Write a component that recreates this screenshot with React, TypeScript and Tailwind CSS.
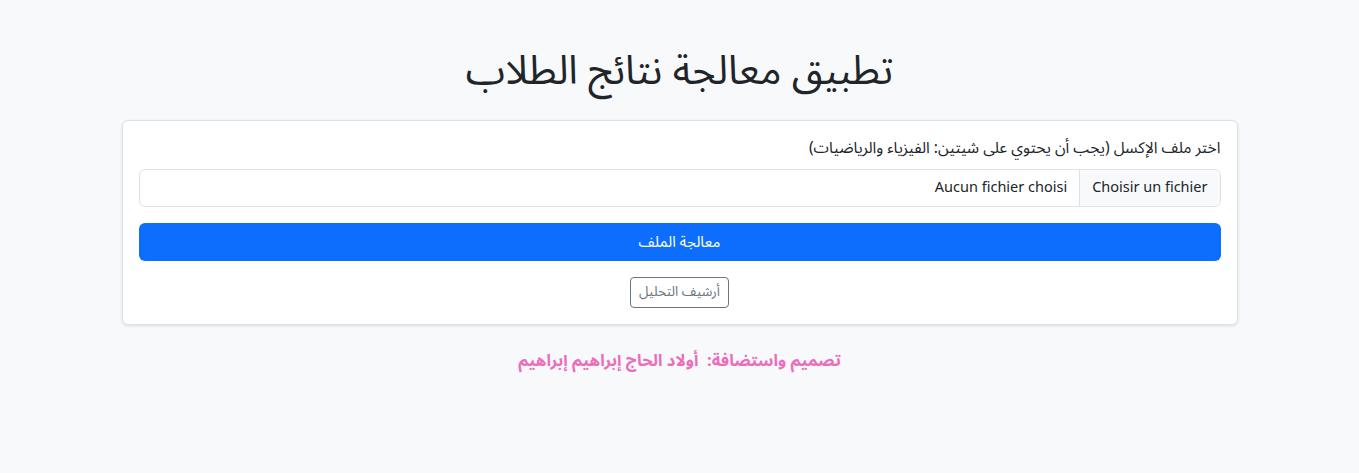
export default function App() {
  const font = { fontFamily: '"Noto Sans Arabic", "DejaVu Sans", "Noto Sans", sans-serif' };
  return (
    <div dir="rtl" className="min-h-[473px] bg-[#f8f9fa] text-[#212529]" style={font}>
      <div className="mx-auto w-[1140px] px-3 pt-12">
        <h1 className="mb-6 text-center text-[40px] leading-[48px] font-normal">تطبيق معالجة نتائج الطلاب</h1>

        <div className="rounded-md border border-[#dee2e6] bg-white p-4 shadow-[0_1px_3px_rgba(0,0,0,0.12)]">
          <label className="mb-2 block text-[15.6px] leading-6">اختر ملف الإكسل (يجب أن يحتوي على شيتين: الفيزياء والرياضيات)</label>
          <div className="mb-4 flex h-[38px] overflow-hidden rounded-md border border-[#dee2e6] bg-white text-[14.5px]">
            <div className="flex items-center border-l border-[#dee2e6] bg-[#f8f9fa] px-3">Choisir un fichier</div>
            <div className="flex items-center px-3">Aucun fichier choisi</div>
          </div>
          <button className="flex h-[38px] w-full items-center justify-center rounded-md bg-[#0d6efd] text-[15px] text-white">
            معالجة الملف
          </button>
          <div className="mt-4 flex justify-center">
            <button className="h-[31px] rounded border border-[#6c757d] px-2 text-[13.5px] text-[#6c757d]">أرشيف التحليل</button>
          </div>
        </div>

        <p className="mt-6 text-center text-[16.5px] leading-6 font-bold text-[#ec6cbd]">
          تصميم واستضافة:&nbsp; أولاد الحاج إبراهيم إبراهيم
        </p>
      </div>
    </div>
  );
}
